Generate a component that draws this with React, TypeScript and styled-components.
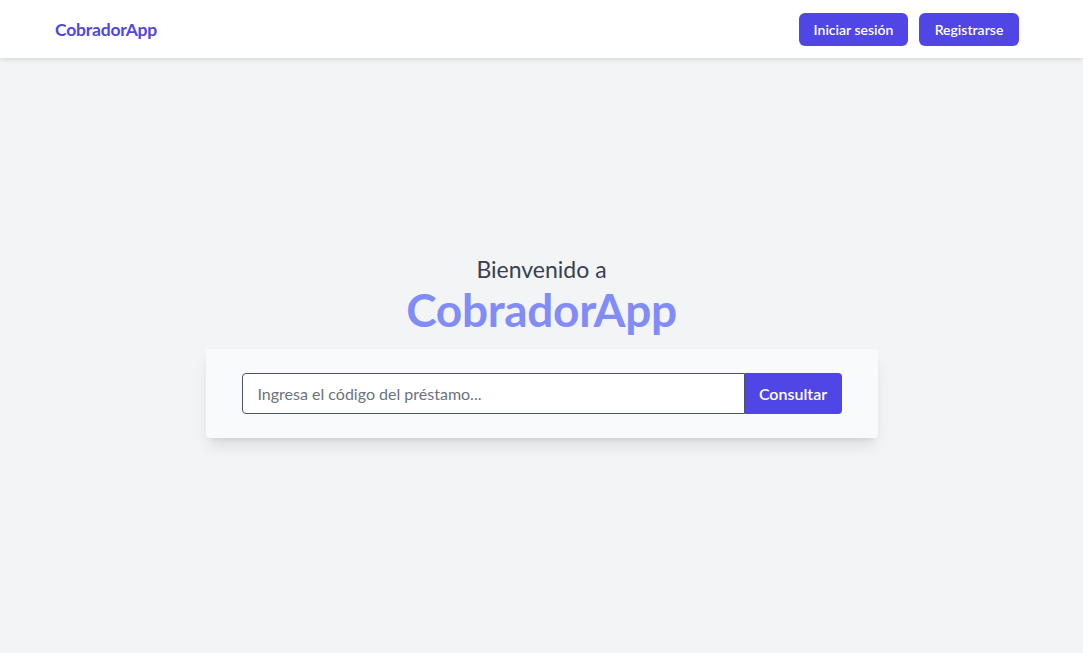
import styled, { createGlobalStyle } from 'styled-components';

const GlobalStyle = createGlobalStyle`
  * {
    box-sizing: border-box;
  }
  html, body {
    margin: 0;
    padding: 0;
    height: 100%;
  }
  body {
    font-family: Lato, "Open Sans", sans-serif;
    background-color: #f3f4f6;
  }
  #root {
    min-height: 100vh;
    display: flex;
    flex-direction: column;
  }
`;

const Header = styled.header`
  height: 58px;
  background-color: #fff;
  box-shadow: 0 2px 4px rgba(0, 0, 0, 0.1);
  display: flex;
  align-items: center;
  justify-content: space-between;
  padding: 0 64px 0 55px;
  position: relative;
  z-index: 2;
`;

const Logo = styled.a`
  color: #4f46e5;
  font-size: 17.5px;
  font-weight: 700;
  text-decoration: none;
  letter-spacing: -0.2px;
`;

const Nav = styled.nav`
  display: flex;
  gap: 11px;
`;

const NavButton = styled.button<{ $width: number }>`
  width: ${({ $width }) => $width}px;
  height: 33px;
  border: none;
  border-radius: 6px;
  background-color: #4f46e5;
  color: #fff;
  font-family: inherit;
  font-size: 14px;
  font-weight: 600;
  cursor: pointer;
`;

const Main = styled.main`
  flex: 1;
  display: flex;
  flex-direction: column;
  align-items: center;
  padding-top: 196px;
`;

const Greeting = styled.p`
  margin: 0;
  font-size: 23px;
  line-height: 30px;
  color: #374151;
`;

const Title = styled.h1`
  margin: 0;
  font-size: 46px;
  line-height: 52px;
  font-weight: 700;
  color: #818cf8;
  letter-spacing: -0.3px;
`;

const Card = styled.div`
  margin-top: 13px;
  width: 672px;
  background-color: #f9fafb;
  border-radius: 4px;
  box-shadow: 0 10px 15px -3px rgba(0, 0, 0, 0.1), 0 4px 6px -4px rgba(0, 0, 0, 0.1);
  padding: 24px 36px;
`;

const SearchForm = styled.form`
  display: flex;
  height: 41px;
`;

const SearchInput = styled.input`
  flex: 1;
  height: 100%;
  border: 1px solid #4b5563;
  border-radius: 4px 0 0 4px;
  background-color: #fff;
  padding: 0 15px;
  font-family: inherit;
  font-size: 16px;
  color: #374151;
  outline: none;

  &::placeholder {
    color: #6b7280;
  }
`;

const SubmitButton = styled.button`
  width: 97px;
  height: 100%;
  border: none;
  border-radius: 0 4px 4px 0;
  background-color: #4f46e5;
  color: #fff;
  font-family: inherit;
  font-size: 16px;
  font-weight: 600;
  cursor: pointer;
`;

const App = () => {
  return (
    <>
      <GlobalStyle />
      <Header>
        <Logo href="#">CobradorApp</Logo>
        <Nav>
          <NavButton $width={109}>Iniciar sesión</NavButton>
          <NavButton $width={100}>Registrarse</NavButton>
        </Nav>
      </Header>
      <Main>
        <Greeting>Bienvenido a</Greeting>
        <Title>CobradorApp</Title>
        <Card>
          <SearchForm onSubmit={(e) => e.preventDefault()}>
            <SearchInput placeholder="Ingresa el código del préstamo..." />
            <SubmitButton type="submit">Consultar</SubmitButton>
          </SearchForm>
        </Card>
      </Main>
    </>
  );
};

export default App;
